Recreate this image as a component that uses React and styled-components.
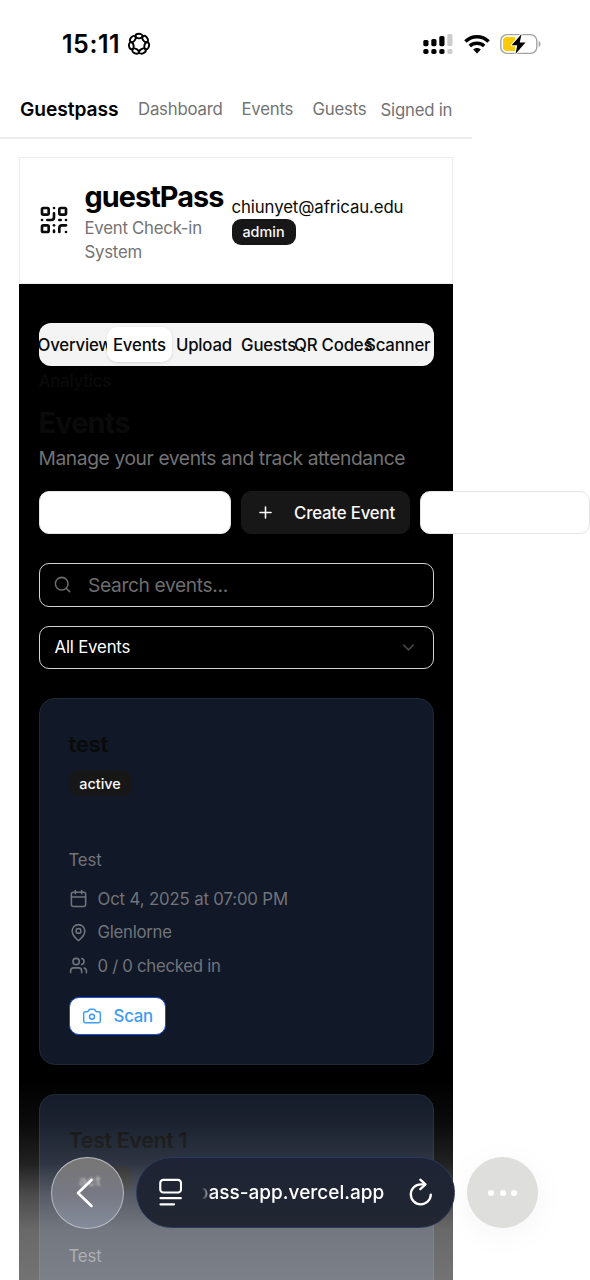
import React from "react";
import styled, { createGlobalStyle } from "styled-components";
import { Search, ChevronDown, Plus, Calendar, MapPin, Users, Camera, QrCode } from "lucide-react";

const GlobalStyle = createGlobalStyle`
  * { box-sizing: border-box; }
  body { margin: 0; background: #fff; font-family: Inter, "Liberation Sans", sans-serif; color: #0a0a0a; }
  h1, h2, h3, p { margin: 0; }
  button, input { font-family: inherit; }
`;

const Screen = styled.div`
  position: relative;
  width: 590px;
  height: 1280px;
  overflow: hidden;
  background: #fff;
`;

const StatusBar = styled.header`
  display: flex;
  align-items: center;
  height: 82px;
  padding: 6px 48px 0 62px;
`;

const Time = styled.span`
  width: 65px;
  font-size: 25px;
  font-weight: 600;
  letter-spacing: 0.55px;
  line-height: 30px;
  color: #000;
`;

const StatusIcons = styled.div`
  display: flex;
  align-items: center;
  gap: 10px;
  margin-left: auto;
`;

const Nav = styled.nav`
  display: flex;
  align-items: center;
  width: 472px;
  height: 57px;
  padding: 0 19px 2px 20px;
  border-bottom: 2px solid #ececec;
`;

const Brand = styled.span`
  width: 118px;
  font-size: 19.2px;
  font-weight: 600;
  letter-spacing: -0.07px;
  color: #000;
`;

const NavLink = styled.a`
  width: ${(p) => p.$width}px;
  padding-top: ${(p) => p.$drop || 0}px;
  font-size: 16.8px;
  letter-spacing: -0.22px;
  white-space: nowrap;
  color: #737373;
`;

const Panel = styled.main`
  width: 434px;
  height: 1124px;
  margin: 18px 0 0 19px;
  background: #000;
`;

const PanelHeader = styled.section`
  display: flex;
  align-items: center;
  height: 127px;
  padding: 0 19px 2px 18px;
  background: #fff;
  border: 1px solid #ececec;
`;

const TitleBlock = styled.div`
  width: 147px;
  margin: 2px 0 0 14.5px;
`;

const Title = styled.h1`
  font-size: 28.8px;
  font-weight: 700;
  line-height: 38px;
  letter-spacing: -0.93px;
  color: #000;
`;

const Tagline = styled.p`
  width: 135px;
  font-size: 16.8px;
  line-height: 24px;
  letter-spacing: -0.25px;
  color: #737373;
`;

const UserBlock = styled.div`
  display: flex;
  flex-direction: column;
  align-items: flex-start;
`;

const Email = styled.span`
  font-size: 16.8px;
  line-height: 24px;
  letter-spacing: -0.1px;
  color: #0a0a0a;
`;

const Badge = styled.span`
  display: inline-flex;
  align-items: center;
  justify-content: center;
  width: ${(p) => p.$width || 64}px;
  height: 26px;
  border-radius: 9px;
  background: #171717;
  color: #fafafa;
  font-size: 14.4px;
  font-weight: 500;
`;

const Content = styled.div`
  display: flex;
  flex-direction: column;
  padding: 39px 19px 0 19.5px;
`;

const Tabs = styled.div`
  display: grid;
  grid-template-columns: repeat(6, minmax(0, 1fr));
  grid-auto-rows: 36px;
  flex: none;
  height: 43px;
  padding: 4px;
  border-radius: 12px;
  background: #f4f4f4;
`;

const Tab = styled.button`
  display: flex;
  align-items: center;
  justify-content: center;
  height: 35px;
  padding: 0;
  border: 0;
  border-radius: 10px;
  background: ${(p) => (p.$active ? "#fff" : "transparent")};
  box-shadow: ${(p) => (p.$active ? "0 1px 3px rgba(0,0,0,.12)" : "none")};
  font-size: 16.8px;
  font-weight: 500;
  letter-spacing: -0.2px;
  white-space: nowrap;
  color: #0a0a0a;
`;

const Heading = styled.h2`
  margin-top: 38px;
  font-size: 28.8px;
  font-weight: 700;
  line-height: 38px;
  letter-spacing: -0.8px;
  color: #0a0a0a;
`;

const Subtitle = styled.p`
  margin-top: 1px;
  font-size: 19.2px;
  line-height: 30px;
  letter-spacing: -0.38px;
  white-space: nowrap;
  color: #737373;
`;

const Actions = styled.div`
  display: flex;
  gap: 10px;
  margin-top: 18px;
`;

const Action = styled.button`
  display: flex;
  flex: none;
  align-items: center;
  width: ${(p) => p.$width}px;
  height: 43px;
  padding: 0 14px;
  border: 1px solid ${(p) => (p.$dark ? "#171717" : "#e5e5e5")};
  border-radius: 10px;
  background: ${(p) => (p.$dark ? "#171717" : "#fff")};
  color: #fafafa;
  font-size: 16.8px;
  font-weight: 500;
  letter-spacing: -0.17px;
  white-space: nowrap;
  svg { margin-right: 19px; flex: none; }
`;

const Field = styled.div`
  display: flex;
  align-items: center;
  height: 43.5px;
  margin-top: ${(p) => p.$top}px;
  padding: 0 15px 0 ${(p) => p.$left}px;
  border: 1.5px solid #d4d4d4;
  border-radius: 10px;
  font-size: ${(p) => p.$size}px;
  letter-spacing: ${(p) => p.$track}px;
  color: ${(p) => p.$color};
  svg { flex: none; }
`;

const Placeholder = styled.span`
  margin-left: 16px;
`;

const SelectIcon = styled(ChevronDown)`
  margin-left: auto;
  color: #454545;
`;

const Card = styled.article`
  display: flex;
  flex-direction: column;
  align-items: flex-start;
  flex: none;
  height: 367px;
  margin-top: 29px;
  padding: 28px 29px;
  border: 1px solid #1f2937;
  border-radius: 16px;
  background: #111827;
`;

const CardTitle = styled.h3`
  margin-bottom: 9px;
  font-size: 21.6px;
  font-weight: 600;
  line-height: 34px;
  letter-spacing: ${(p) => p.$track || 0}px;
  color: #0a0a0a;
`;

const CardText = styled.p`
  margin: 52px 0 10px;
  font-size: 16.8px;
  line-height: 24px;
  letter-spacing: -0.15px;
  color: #71747b;
`;

const Meta = styled.div`
  display: flex;
  align-items: center;
  gap: 10px;
  height: 33.6px;
  font-size: 16.8px;
  letter-spacing: ${(p) => p.$track || 0}px;
  color: #71747b;
`;

const ScanButton = styled.button`
  display: flex;
  align-items: center;
  width: 97px;
  height: 38px;
  margin-top: 14px;
  padding: 0 12px;
  border: 1px solid #1d4ed8;
  border-radius: 10px;
  background: #fff;
  color: #409bf5;
  font-size: 16.8px;
  font-weight: 500;
  letter-spacing: -0.2px;
  svg { margin-right: 12px; flex: none; }
`;

const BottomFade = styled.div`
  position: absolute;
  inset: auto 0 0 0;
  height: 200px;
  background: linear-gradient(to bottom,
    rgba(255,255,255,0) 0%, rgba(255,255,255,.045) 22%, rgba(255,255,255,.13) 42%,
    rgba(255,255,255,.29) 57%, rgba(255,255,255,.41) 75%, rgba(255,255,255,.45) 100%);
`;

const BrowserBar = styled.footer`
  position: absolute;
  left: 51px;
  top: 1157px;
  display: flex;
  align-items: center;
  height: 72px;
`;

const BackButton = styled.div`
  position: relative;
  display: flex;
  align-items: center;
  justify-content: center;
  width: 72.5px;
  height: 72px;
  padding-right: 3px;
  overflow: hidden;
  border: 1.5px solid #b9bcc4;
  border-radius: 50%;
  background: linear-gradient(#777674, #777983 50%, #858b9b);
`;

const Refraction = styled.span`
  position: absolute;
  left: 27px;
  top: 14px;
  font-size: 14.4px;
  font-weight: 600;
  color: #b5b5b5;
  filter: blur(0.8px);
`;

const BackIcon = styled.svg`
  position: relative;
`;

const AddressBar = styled.div`
  display: flex;
  align-items: center;
  width: 319px;
  height: 71px;
  margin: 0 0 1px 12px;
  padding: 0 20px 0 22.5px;
  border: 1px solid #29385c;
  border-radius: 36px;
  background: linear-gradient(#1e2435, #222632);
  color: #fff;
`;

const Address = styled.div`
  display: flex;
  flex: none;
  justify-content: flex-end;
  width: 182px;
  margin: 0 24px 0 20px;
  overflow: hidden;
  font-size: 19px;
  font-weight: 500;
  letter-spacing: 0;
  line-height: 28px;
  white-space: nowrap;
  mask-image: linear-gradient(to right, transparent, #000 10px);
`;

const MoreButton = styled.div`
  display: flex;
  align-items: center;
  justify-content: center;
  gap: 5.5px;
  width: 71px;
  height: 71px;
  margin: 0 0 1px 12.5px;
  border-radius: 50%;
  background: #dededd;
  box-shadow: 0 6px 34px rgba(0, 0, 0, 0.045);
`;

const Dot = styled.span`
  width: 6px;
  height: 6px;
  border-radius: 50%;
  background: #fff;
`;

function FocusIcon() {
  const lobes = Array.from({ length: 7 }, (_, i) => (i * 360) / 7);
  return (
    <svg width="24" height="24" viewBox="-12 -12 24 24" fill="none" stroke="#000" strokeWidth="1.9">
      {lobes.map((a) => (
        <ellipse key={a} cx="0" cy="-7.900" rx="3.500" ry="2.300" transform={`rotate(${a})`} />
      ))}
    </svg>
  );
}

function SignalIcon() {
  return (
    <svg width="31" height="22" viewBox="0 0 31 22">
      {[[0.3, 7], [8.3, 6], [16.3, 3], [24.3, 1]].map(([x, y], i) => (
        <g key={x} fill={i === 3 ? "#ccc" : "#000"}>
          <rect x={x} y={y} width="5.200" height={13.2 - y} rx="1.600" />
          <rect x={x} y="15.900" width="5.200" height="5.200" rx="1.800" />
        </g>
      ))}
    </svg>
  );
}

function WifiIcon() {
  return (
    <svg width="26" height="20" viewBox="0 0 26 20" fill="none" stroke="#000" strokeWidth="3.500">
      <path d="M1.400 7.400C8 1.100 18 1.100 24.600 7.400" />
      <path d="M5.800 12C9.800 8.200 16.200 8.200 20.200 12" />
      <path d="M9.200 15.600C11.400 13.600 14.600 13.600 16.800 15.600L13 19.400Z" fill="#000" stroke="none" />
    </svg>
  );
}

function BatteryIcon() {
  return (
    <svg width="42" height="22" viewBox="0 0 42 22">
      <rect x="0.800" y="1.600" width="36" height="18.800" rx="6.200" fill="#fff" stroke="#a3a3a3" strokeWidth="1.400" />
      <path d="M7 4h8v14H7a4 4 0 0 1-4-4V8a4 4 0 0 1 4-4Z" fill="#f9ca08" />
      <path d="M38.700 8c2.400.8 2.400 5.200 0 6Z" fill="#a3a3a3" />
      <path d="M21.600 1L11.600 12.300H17.300L15.500 21L25.500 9.500H19.700Z" fill="#000" stroke="#fff" strokeWidth="2" paintOrder="stroke" strokeLinejoin="round" />
    </svg>
  );
}

function PageIcon() {
  return (
    <svg width="24" height="29" viewBox="0 0 24 29" fill="none" stroke="#fff" strokeWidth="2.200" strokeLinecap="round">
      <rect x="1.300" y="1.500" width="21.400" height="13" rx="3.200" />
      <path d="M1.500 20.300H22.500M1.500 26.700H15.500" />
    </svg>
  );
}

function ReloadIcon() {
  return (
    <svg width="26" height="30" viewBox="0 0 26 30" fill="none" stroke="#fff" strokeWidth="2.400" strokeLinecap="round" strokeLinejoin="round">
      <path d="M23.500 16.600A10.300 10.300 0 1 1 13.200 6.100H17.500" />
      <path d="M12.700 1.300L18 6.200L12.700 11" />
    </svg>
  );
}

const tabs = ["Overview", "Events", "Upload", "Guests", "QR Codes", "Scanner", "Analytics"];

export default function App() {
  return (
    <>
      <GlobalStyle />
      <Screen>
        <StatusBar>
          <Time>15:11</Time>
          <FocusIcon />
          <StatusIcons>
            <SignalIcon />
            <WifiIcon />
            <BatteryIcon />
          </StatusIcons>
        </StatusBar>
        <Nav>
          <Brand>Guestpass</Brand>
          <NavLink $width={103.5}>Dashboard</NavLink>
          <NavLink $width={71}>Events</NavLink>
          <NavLink $width={68}>Guests</NavLink>
          <NavLink $width={72} $drop={2}>Signed in</NavLink>
        </Nav>
        <Panel>
          <PanelHeader>
            <QrCode size={32} strokeWidth={2} color="#0a0a0a" />
            <TitleBlock>
              <Title>guestPass</Title>
              <Tagline>Event Check-in System</Tagline>
            </TitleBlock>
            <UserBlock>
              <Email>chiunyet@africau.edu</Email>
              <Badge>admin</Badge>
            </UserBlock>
          </PanelHeader>
          <Content>
            <Tabs>
              {tabs.map((t) => (
                <Tab key={t} $active={t === "Events"}>{t}</Tab>
              ))}
            </Tabs>
            <Heading>Events</Heading>
            <Subtitle>Manage your events and track attendance</Subtitle>
            <Actions>
              <Action $width={192.5} aria-label="Refresh" />
              <Action $width={169} $dark>
                <Plus size={19} strokeWidth={2} />
                Create Event
              </Action>
              <Action $width={169.5} aria-label="Export" />
            </Actions>
            <Field $top={29} $left={13.5} $size={19.2} $track={-0.36} $color="#6d6d6d">
              <Search size={19} strokeWidth={1.9} />
              <Placeholder>Search events...</Placeholder>
            </Field>
            <Field $top={19} $left={15} $size={16.8} $track={-0.18} $color="#fff">
              All Events
              <SelectIcon size={19} strokeWidth={2} />
            </Field>
            <Card>
              <CardTitle>test</CardTitle>
              <Badge $width={63}>active</Badge>
              <CardText>Test</CardText>
              <Meta $track={-0.15}><Calendar size={19} strokeWidth={2} />Oct 4, 2025 at 07:00 PM</Meta>
              <Meta $track={-0.28}><MapPin size={19} strokeWidth={2} />Glenlorne</Meta>
              <Meta $track={-0.3}><Users size={19} strokeWidth={2} />0 / 0 checked in</Meta>
              <ScanButton><Camera size={20} strokeWidth={1.800} />Scan</ScanButton>
            </Card>
            <Card>
              <CardTitle $track={-0.42}>Test Event 1</CardTitle>
              <Badge $width={63}>active</Badge>
              <CardText>Test</CardText>
            </Card>
          </Content>
        </Panel>
        <BottomFade />
        <BrowserBar>
          <BackButton>
            <Refraction>act</Refraction>
            <BackIcon width="20" height="30" viewBox="0 0 20 30" fill="none" stroke="#fff" strokeWidth="2.600" strokeLinecap="round" strokeLinejoin="round">
              <path d="M15.500 2L2 15L15.500 28" />
            </BackIcon>
          </BackButton>
          <AddressBar>
            <PageIcon />
            <Address><span>guestpass-app.vercel.app</span></Address>
            <ReloadIcon />
          </AddressBar>
          <MoreButton>
            <Dot /><Dot /><Dot />
          </MoreButton>
        </BrowserBar>
      </Screen>
    </>
  );
}
